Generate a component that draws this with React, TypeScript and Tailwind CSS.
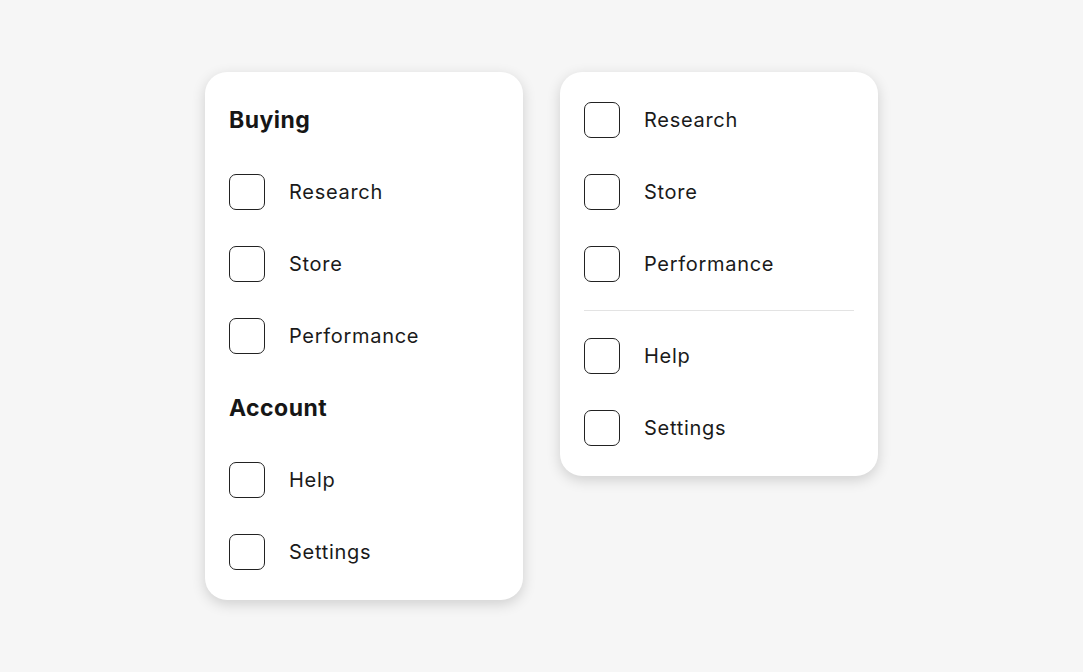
import React from "react";

function Checkbox({ label }: { label: string }) {
  return (
    <label className="flex h-[72px] items-center gap-6">
      <span className="h-9 w-9 shrink-0 rounded-[7px] border-[1.75px] border-[#222] bg-white" />
      <span className="text-[20px] tracking-[0.035em] text-[#1a1a1a]">{label}</span>
    </label>
  );
}

function Heading({ children }: { children: React.ReactNode }) {
  return (
    <div className="flex h-[72px] items-center text-[23px] font-bold tracking-[0.02em] text-[#161616]">
      {children}
    </div>
  );
}

export default function App() {
  return (
    <div
      className="flex min-h-screen w-full items-start justify-center gap-[37px] bg-[#f6f6f6] pt-[72px]"
      style={{ fontFamily: "Inter, 'Noto Sans', sans-serif" }}
    >
      {/* Grouped with headings */}
      <div className="w-[318px] rounded-[22px] bg-white px-6 py-3 shadow-[0_4px_14px_rgba(0,0,0,0.16)]">
        <Heading>Buying</Heading>
        <Checkbox label="Research" />
        <Checkbox label="Store" />
        <Checkbox label="Performance" />
        <Heading>Account</Heading>
        <Checkbox label="Help" />
        <Checkbox label="Settings" />
      </div>

      {/* Grouped with divider */}
      <div className="w-[318px] rounded-[22px] bg-white px-6 py-3 shadow-[0_4px_14px_rgba(0,0,0,0.16)]">
        <Checkbox label="Research" />
        <Checkbox label="Store" />
        <Checkbox label="Performance" />
        <div className="flex h-5 items-center">
          <div className="h-px w-full bg-[#e3e3e3]" />
        </div>
        <Checkbox label="Help" />
        <Checkbox label="Settings" />
      </div>
    </div>
  );
}
